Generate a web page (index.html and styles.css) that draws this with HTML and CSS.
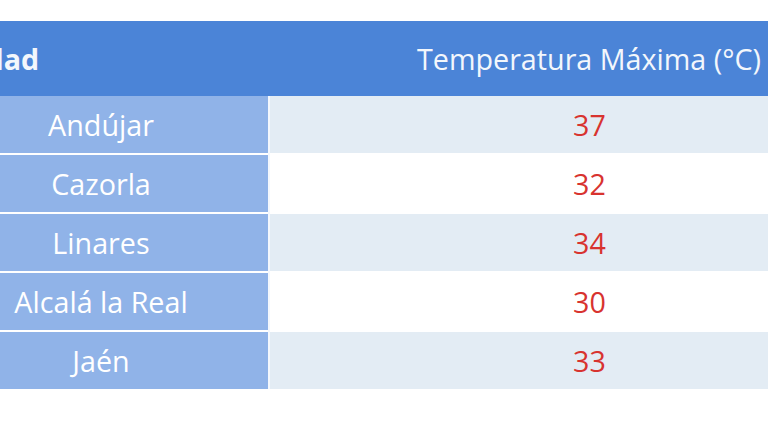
FILE: index.html
```html
<!DOCTYPE html>
<html lang="es">
<head>
<meta charset="utf-8">
<title>Temperaturas</title>
<link rel="stylesheet" href="styles.css">
</head>
<body>
<div class="viewport">
  <table class="temps">
    <thead>
      <tr>
        <th class="loc-head"><span>Localidad</span></th>
        <th class="temp-head">Temperatura Máxima (°C)</th>
      </tr>
    </thead>
    <tbody>
      <tr class="odd"><td class="loc">Andújar</td><td class="val">37</td></tr>
      <tr class="even"><td class="loc">Cazorla</td><td class="val">32</td></tr>
      <tr class="odd"><td class="loc">Linares</td><td class="val">34</td></tr>
      <tr class="even"><td class="loc">Alcalá la Real</td><td class="val">30</td></tr>
      <tr class="odd"><td class="loc">Jaén</td><td class="val">33</td></tr>
    </tbody>
  </table>
</div>
</body>
</html>
```
FILE: styles.css
```css
html, body {
  margin: 0;
  padding: 0;
  background: #ffffff;
}
.viewport {
  width: 768px;
  height: 432px;
  overflow: hidden;
  padding-top: 21px;
  box-sizing: border-box;
}
.temps {
  margin-left: -66px;
  width: 975px;
  border-collapse: collapse;
  font-family: "Open Sans", "Noto Sans", sans-serif;
  font-size: 28.7px;
  table-layout: fixed;
}
.temps th, .temps td {
  padding: 0;
  text-align: center;
  vertical-align: middle;
}
.temps thead th {
  background: #4b84d7;
  color: #f3f7fc;
  height: 75px;
}
.loc-head {
  width: 335px;
  font-weight: 700;
  text-align: left !important;
}
.loc-head span {
  display: block;
  margin-left: -32px;
  white-space: nowrap;
}
.temp-head {
  font-weight: 400;
}
.temps tbody td {
  height: 57px;
  border-top: 2px solid #ffffff;
}
.temps tbody tr:first-child td {
  border-top: 0;
}
.loc {
  background: #90b3e8;
  color: #ffffff;
  border-right: 2px solid #f4f8fd;
}
.val {
  color: #d8332f;
}
.odd .val {
  background: #e3ecf4;
}
.even .val {
  background: #ffffff;
}
```
